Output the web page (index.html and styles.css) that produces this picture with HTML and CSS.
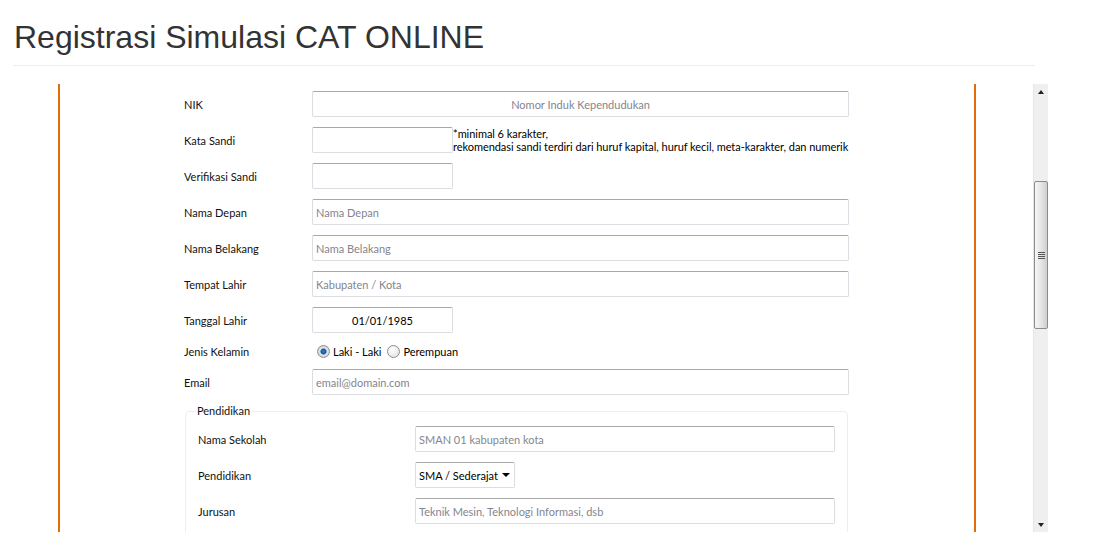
FILE: index.html
```html
<!DOCTYPE html>
<html>
<head>
  <title>Registrasi Simulasi CAT ONLINE</title>
  <link rel="stylesheet" href="styles.css">
</head>
<body>
  <h1 class="page-title">Registrasi Simulasi CAT ONLINE</h1>
  <hr class="title-rule">

  <div class="frame">
    <div class="frame-view">
      <div class="panel">
        <form class="reg-form">
          <div class="row">
            <label for="nik">NIK</label>
            <input type="text" id="nik" class="wide centered" placeholder="Nomor Induk Kependudukan">
          </div>

          <div class="row">
            <label for="sandi">Kata Sandi</label>
            <input type="password" id="sandi" class="short">
            <p class="hint">*minimal 6 karakter,<br>rekomendasi sandi terdiri dari huruf kapital, huruf kecil, meta-karakter, dan numerik</p>
          </div>

          <div class="row">
            <label for="sandi2">Verifikasi Sandi</label>
            <input type="password" id="sandi2" class="short">
          </div>

          <div class="row">
            <label for="depan">Nama Depan</label>
            <input type="text" id="depan" class="wide" placeholder="Nama Depan">
          </div>

          <div class="row">
            <label for="belakang">Nama Belakang</label>
            <input type="text" id="belakang" class="wide" placeholder="Nama Belakang">
          </div>

          <div class="row">
            <label for="tempat">Tempat Lahir</label>
            <input type="text" id="tempat" class="wide" placeholder="Kabupaten / Kota">
          </div>

          <div class="row">
            <label for="tanggal">Tanggal Lahir</label>
            <input type="text" id="tanggal" class="short centered" value="01/01/1985">
          </div>

          <div class="row radio-row">
            <label>Jenis Kelamin</label>
            <div class="radios">
              <input type="radio" name="jk" id="laki" checked>
              <label for="laki" class="radio-label">Laki - Laki</label>
              <input type="radio" name="jk" id="perempuan">
              <label for="perempuan" class="radio-label">Perempuan</label>
            </div>
          </div>

          <div class="row">
            <label for="email">Email</label>
            <input type="text" id="email" class="wide" placeholder="email@domain.com">
          </div>

          <fieldset class="group">
            <legend>Pendidikan</legend>

            <div class="row">
              <label for="sekolah">Nama Sekolah</label>
              <input type="text" id="sekolah" class="group-input" placeholder="SMAN 01 kabupaten kota">
            </div>

            <div class="row">
              <label for="pendidikan">Pendidikan</label>
              <span class="select-wrap">
                <select id="pendidikan">
                  <option>SMA / Sederajat</option>
                  <option>D3</option>
                  <option>S1</option>
                </select>
              </span>
            </div>

            <div class="row">
              <label for="jurusan">Jurusan</label>
              <input type="text" id="jurusan" class="group-input" placeholder="Teknik Mesin, Teknologi Informasi, dsb">
            </div>
          </fieldset>
        </form>
      </div>
    </div>

    <!-- old style scrollbar of the frame -->
    <div class="scrollbar">
      <span class="arrow up"></span>
      <div class="track">
        <div class="thumb"><span class="grip"></span></div>
      </div>
      <span class="arrow down"></span>
    </div>
  </div>
</body>
</html>
```

FILE: styles.css
```css
body {
  margin: 0;
  padding: 0;
  font-family: Lato, "Open Sans", sans-serif;
  background-color: #ffffff;
}

.page-title {
  margin: 19px 0 10px 14px;
  font-family: "Liberation Sans", Arial, sans-serif;
  font-size: 32px;
  font-weight: normal;
  line-height: 36px;
  color: #333333;
}

.title-rule {
  margin: 0 0 18px 13px;
  width: 1022px;
  border: none;
  border-top: 1px solid #eeeeee;
  height: 0;
}

.frame {
  display: flex;
  margin-left: 13px;
  width: 1035px;
  height: 448px;
}

.frame-view {
  flex: 1;
  overflow: hidden;
}

.panel {
  margin-left: 45px;
  width: 918px;
  height: 100%;
  border-left: 2px solid #e36c09;
  border-right: 2px solid #e36c09;
  padding-top: 7px;
  box-sizing: border-box;
}

.reg-form {
  margin-left: 124px;
  width: 666px;
  font-size: 11px;
  color: #111111;
}

.row {
  display: flex;
  align-items: center;
  height: 26px;
  margin-bottom: 10px;
}

.row > label {
  width: 128px;
  flex-shrink: 0;
}

input[type="text"],
input[type="password"],
select {
  height: 26px;
  box-sizing: border-box;
  padding: 0 3px;
  border: 1px solid #dcdde3;
  border-top-color: #a9a9a9;
  border-radius: 2px;
  font-family: Lato, "Open Sans", sans-serif;
  font-size: 11px;
  color: #000000;
  background-color: #ffffff;
  margin: 0;
}

input::placeholder {
  color: #85858c;
}

.wide {
  width: 537px;
}

.short {
  width: 141px;
}

.centered {
  text-align: center;
}

.hint {
  align-self: flex-start;
  margin: 0;
  height: 26px;
  line-height: 13px;
  letter-spacing: -0.05px;
  color: #000000;
  white-space: nowrap;
}

.radio-row {
  height: 16px;
}

.radios {
  display: flex;
  align-items: center;
}

input[type="radio"] {
  appearance: none;
  width: 13px;
  height: 13px;
  margin: 0 3px 0 5px;
  border: 1px solid #8e8f8f;
  border-radius: 50%;
  background: radial-gradient(circle at 40% 35%, #ffffff, #dcdcdc);
  box-sizing: border-box;
}

input[type="radio"]:checked {
  background: radial-gradient(circle, #2a82c9 0, #0f5a9e 2.5px, #e6e6e6 3.5px, #cfcfcf 6px);
}

.radio-label {
  margin-right: 1px;
  color: #000000;
}

.group {
  margin: 0 0 0 1px;
  width: 663px;
  padding: 9px 11px 6px 12px;
  border: 1px solid #eeeeee;
  border-radius: 4px;
  box-sizing: border-box;
}

.group legend {
  padding: 0 1px;
  margin-left: -2px;
  line-height: 12px;
}

.group .row > label {
  width: 217px;
}

.group-input {
  width: 420px;
}

.select-wrap {
  position: relative;
  display: inline-block;
}

.select-wrap select {
  appearance: none;
  width: 100px;
  padding-left: 3px;
}

.select-wrap::after {
  content: "";
  position: absolute;
  right: 5px;
  top: 11px;
  border-left: 4px solid transparent;
  border-right: 4px solid transparent;
  border-top: 4px solid #000000;
  pointer-events: none;
}

.scrollbar {
  width: 15px;
  display: flex;
  flex-direction: column;
  background-color: #efefef;
  border-left: 1px solid #e6e6e6;
  box-sizing: border-box;
}

.arrow {
  height: 15px;
  display: flex;
  align-items: center;
  justify-content: center;
}

.arrow::before {
  content: "";
  border-left: 3px solid transparent;
  border-right: 3px solid transparent;
}

.arrow.up::before {
  border-bottom: 4px solid #222222;
}

.arrow.down::before {
  border-top: 4px solid #222222;
}

.track {
  flex: 1;
}

.thumb {
  margin-top: 82px;
  height: 148px;
  border: 1px solid #8c8c8c;
  border-radius: 2px;
  background: linear-gradient(to right, #f6f6f6, #e6e6e6 50%, #cfcfcf);
  display: flex;
  align-items: center;
  justify-content: center;
  box-sizing: border-box;
}

.grip {
  width: 7px;
  height: 7px;
  background: repeating-linear-gradient(to bottom, #555555 0, #555555 1px, transparent 1px, transparent 2px);
}
```
